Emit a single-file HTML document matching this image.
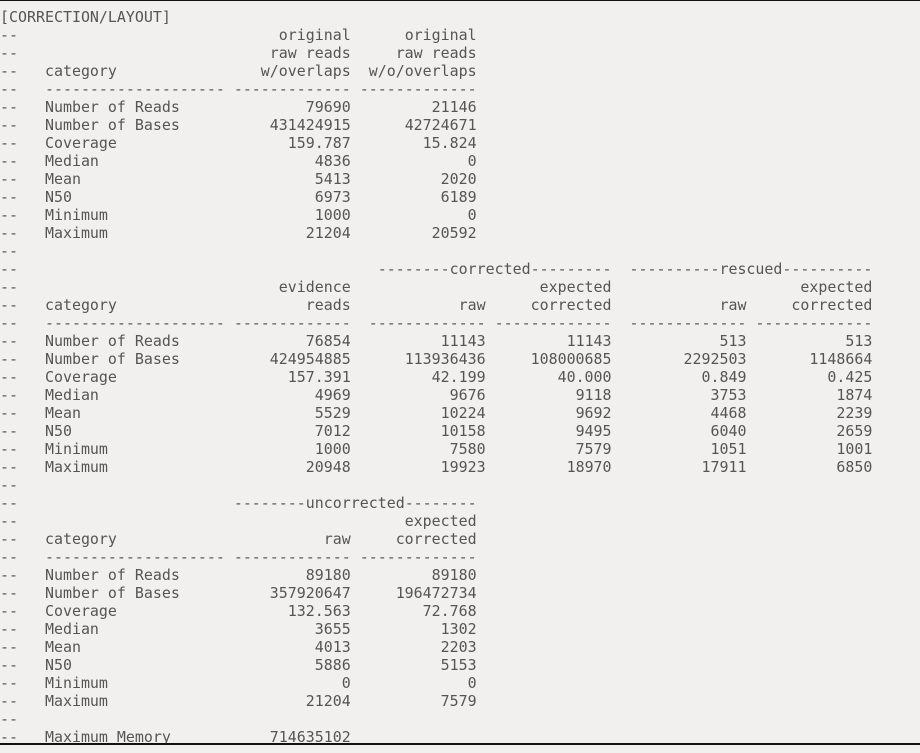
<!DOCTYPE html>
<html><head><meta charset="utf-8"><style>
html,body{margin:0;padding:0;background:#f2f0ee;width:920px;height:753px;overflow:hidden;position:relative}
pre{margin:0;position:absolute;left:0;top:8px;font-family:"DejaVu Sans Mono","Liberation Mono",monospace;font-size:14.95px;line-height:18px;color:#555}
.l{display:inline-block;width:20ch}
.r{display:inline-block;width:13ch;text-align:right}
.top{position:absolute;left:0;top:0;width:920px;height:1px;background:#111}
.bot{position:absolute;left:0;top:743px;width:920px;height:2px;background:#111}
.below{position:absolute;left:0;top:745px;width:920px;height:8px;background:#f2f0ee}
</style></head><body>
<pre>[CORRECTION/LAYOUT]
--   <span class="l"></span> <span class="r">original</span> <span class="r">original</span>
--   <span class="l"></span> <span class="r">raw reads</span> <span class="r">raw reads</span>
--   <span class="l">category</span> <span class="r">w/overlaps</span> <span class="r">w/o/overlaps</span>
--   -------------------- ------------- -------------
--   <span class="l">Number of Reads</span> <span class="r">79690</span> <span class="r">21146</span>
--   <span class="l">Number of Bases</span> <span class="r">431424915</span> <span class="r">42724671</span>
--   <span class="l">Coverage</span> <span class="r">159.787</span> <span class="r">15.824</span>
--   <span class="l">Median</span> <span class="r">4836</span> <span class="r">0</span>
--   <span class="l">Mean</span> <span class="r">5413</span> <span class="r">2020</span>
--   <span class="l">N50</span> <span class="r">6973</span> <span class="r">6189</span>
--   <span class="l">Minimum</span> <span class="r">1000</span> <span class="r">0</span>
--   <span class="l">Maximum</span> <span class="r">21204</span> <span class="r">20592</span>
--
--   <span class="l"></span> <span class="r"></span>   --------corrected---------  ----------rescued----------
--   <span class="l"></span> <span class="r">evidence</span>  <span class="r"></span> <span class="r">expected</span>  <span class="r"></span> <span class="r">expected</span>
--   <span class="l">category</span> <span class="r">reads</span>  <span class="r">raw</span> <span class="r">corrected</span>  <span class="r">raw</span> <span class="r">corrected</span>
--   -------------------- -------------  ------------- -------------  ------------- -------------
--   <span class="l">Number of Reads</span> <span class="r">76854</span>  <span class="r">11143</span> <span class="r">11143</span>  <span class="r">513</span> <span class="r">513</span>
--   <span class="l">Number of Bases</span> <span class="r">424954885</span>  <span class="r">113936436</span> <span class="r">108000685</span>  <span class="r">2292503</span> <span class="r">1148664</span>
--   <span class="l">Coverage</span> <span class="r">157.391</span>  <span class="r">42.199</span> <span class="r">40.000</span>  <span class="r">0.849</span> <span class="r">0.425</span>
--   <span class="l">Median</span> <span class="r">4969</span>  <span class="r">9676</span> <span class="r">9118</span>  <span class="r">3753</span> <span class="r">1874</span>
--   <span class="l">Mean</span> <span class="r">5529</span>  <span class="r">10224</span> <span class="r">9692</span>  <span class="r">4468</span> <span class="r">2239</span>
--   <span class="l">N50</span> <span class="r">7012</span>  <span class="r">10158</span> <span class="r">9495</span>  <span class="r">6040</span> <span class="r">2659</span>
--   <span class="l">Minimum</span> <span class="r">1000</span>  <span class="r">7580</span> <span class="r">7579</span>  <span class="r">1051</span> <span class="r">1001</span>
--   <span class="l">Maximum</span> <span class="r">20948</span>  <span class="r">19923</span> <span class="r">18970</span>  <span class="r">17911</span> <span class="r">6850</span>
--
--   <span class="l"></span> --------uncorrected--------
--   <span class="l"></span> <span class="r"></span> <span class="r">expected</span>
--   <span class="l">category</span> <span class="r">raw</span> <span class="r">corrected</span>
--   -------------------- ------------- -------------
--   <span class="l">Number of Reads</span> <span class="r">89180</span> <span class="r">89180</span>
--   <span class="l">Number of Bases</span> <span class="r">357920647</span> <span class="r">196472734</span>
--   <span class="l">Coverage</span> <span class="r">132.563</span> <span class="r">72.768</span>
--   <span class="l">Median</span> <span class="r">3655</span> <span class="r">1302</span>
--   <span class="l">Mean</span> <span class="r">4013</span> <span class="r">2203</span>
--   <span class="l">N50</span> <span class="r">5886</span> <span class="r">5153</span>
--   <span class="l">Minimum</span> <span class="r">0</span> <span class="r">0</span>
--   <span class="l">Maximum</span> <span class="r">21204</span> <span class="r">7579</span>
--
--   <span class="l">Maximum Memory</span> <span class="r">714635102</span>
</pre>
<div class="top"></div>
<div class="bot"></div>
<div class="below"></div>
</body></html>
